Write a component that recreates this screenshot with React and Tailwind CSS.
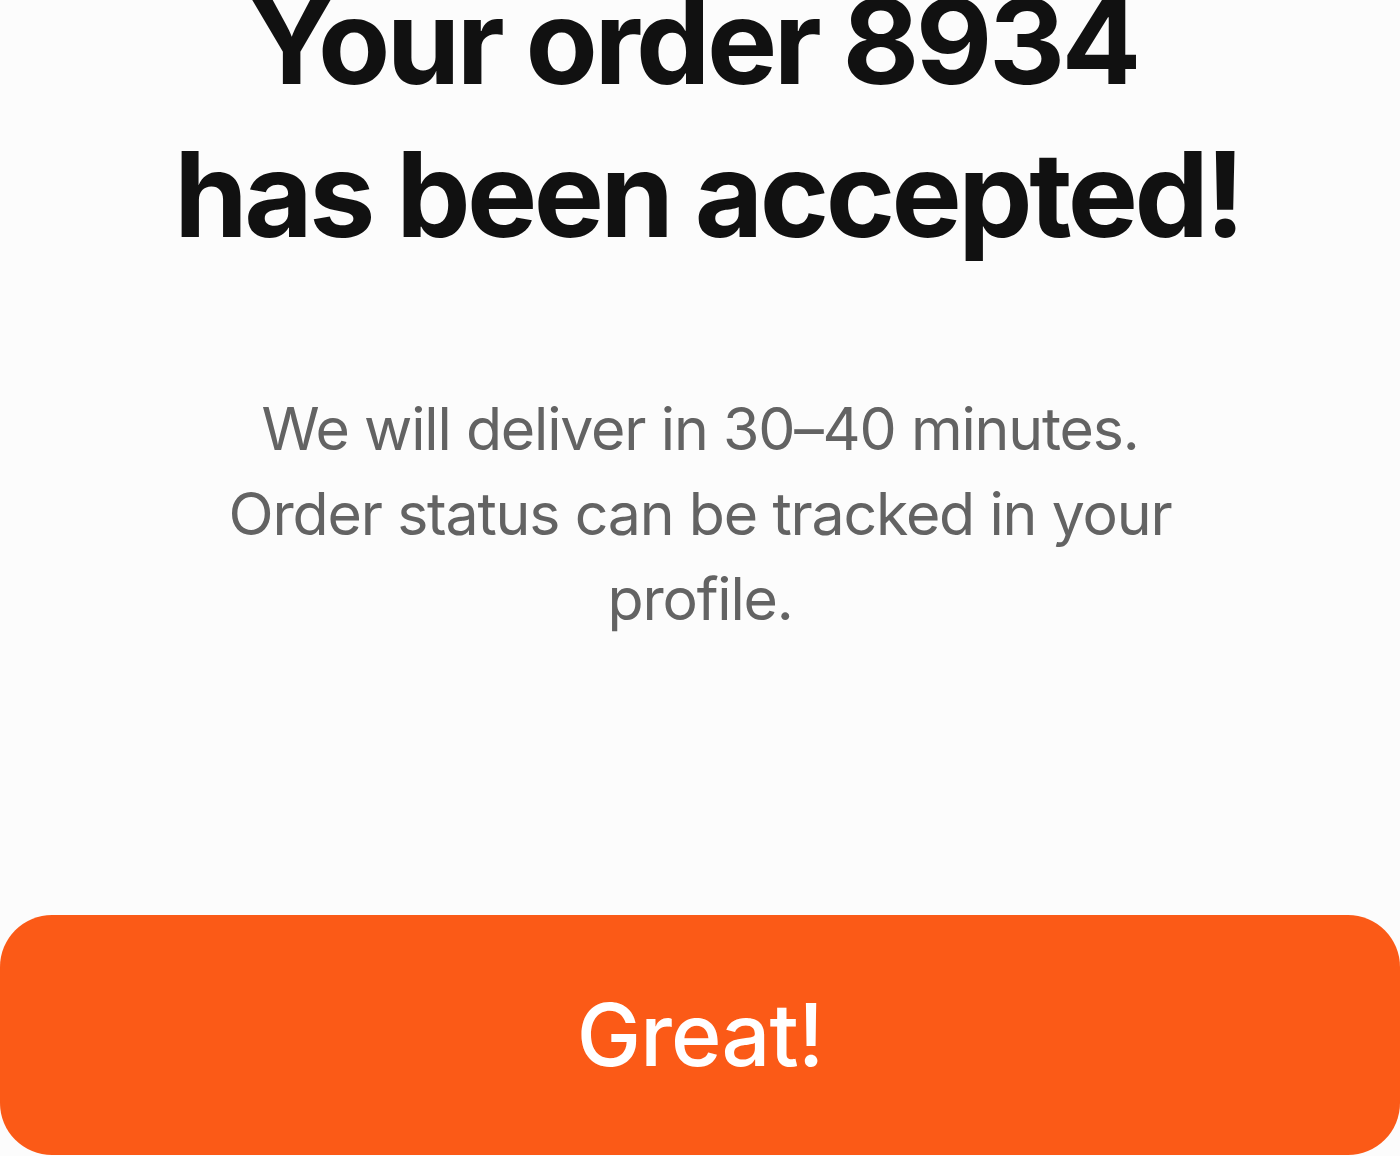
export default function App() {
  return (
    <div className="w-[1400px] h-[1156px] overflow-hidden bg-[#fcfcfc] flex flex-col items-center" style={{ fontFamily: 'Inter, "Noto Sans", sans-serif' }}>
      <h1 className="mt-[-35px] text-center text-[118px] leading-[153px] font-bold tracking-[-0.03em] text-[#111111]">
        <span className="block pr-[14px]">Your order 8934</span>
        <span className="block pl-[16px]">has been accepted!</span>
      </h1>
      <p className="mt-[115px] w-[1000px] text-center text-[59px] leading-[85px] tracking-[-0.02em] text-[#636363]">
        We will deliver in 30–40 minutes. Order status can be tracked in your profile.
      </p>
      <button className="mt-auto mb-[1px] w-full h-[240px] shrink-0 rounded-[52px] bg-[#fb5a17] text-white text-[86px] font-medium tracking-[-0.01em] flex items-center justify-center">
        Great!
      </button>
    </div>
  );
}
